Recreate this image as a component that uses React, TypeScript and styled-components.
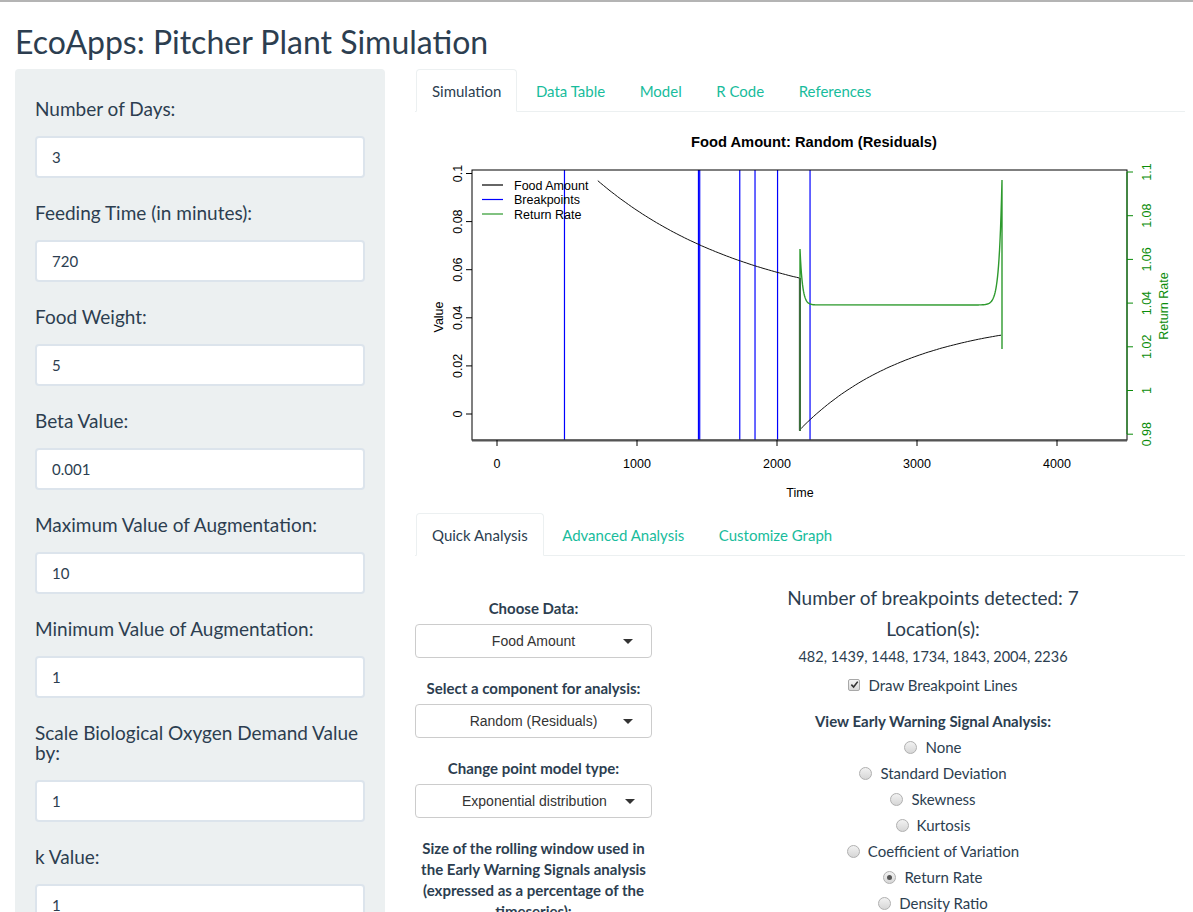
import React from "react";
import styled, { createGlobalStyle } from "styled-components";

const navy = "#2c3e50";
const teal = "#18bc9c";
const line = "#ecf0f1";

const GlobalStyle = createGlobalStyle`
  html, body {
    margin: 0;
    padding: 0;
    overflow: hidden;
  }
  body {
    border-top: 2px solid #b4b4b4;
    font-family: Lato, "Open Sans", sans-serif;
    font-size: 15px;
    color: ${navy};
    background: #ffffff;
  }
`;

const Page = styled.div`
  padding: 0 15px;
`;

const Title = styled.h2`
  margin: 22px 0 10px;
  font-size: 32px;
  line-height: 35px;
  font-weight: 400;
`;

const Layout = styled.div`
  display: flex;
  gap: 30px;
  align-items: flex-start;
`;

const Sidebar = styled.div`
  width: 370px;
  flex-shrink: 0;
  box-sizing: border-box;
  background: ${line};
  border-radius: 4px;
  padding: 30px 20px 20px 20px;
`;

const Field = styled.div`
  margin-bottom: 25px;
`;

const Label = styled.div`
  font-size: 19px;
  line-height: 20px;
  margin-bottom: 17px;
`;

const TextInput = styled.input`
  display: block;
  width: 100%;
  height: 42px;
  box-sizing: border-box;
  border: 2px solid #dce4ec;
  border-radius: 4px;
  padding: 0 15px;
  font-family: Lato, sans-serif;
  font-size: 15px;
  color: ${navy};
  background: #fff;
  outline: none;
`;

const Main = styled.div`
  flex: 1;
  padding-right: 8px;
`;

const TabList = styled.div`
  display: flex;
  gap: 2.5px;
  height: 43px;
  box-sizing: border-box;
  border-bottom: 1px solid ${line};
  padding-left: 1px;
`;

const Tab = styled.div<{ $active?: boolean }>`
  height: 43px;
  box-sizing: border-box;
  padding: 0 15px;
  display: flex;
  align-items: center;
  border: 1px solid ${(p) => (p.$active ? line : "transparent")};
  border-bottom-color: ${(p) => (p.$active ? "#fff" : "transparent")};
  border-radius: 4px 4px 0 0;
  background: ${(p) => (p.$active ? "#fff" : "transparent")};
  color: ${(p) => (p.$active ? navy : teal)};
  font-size: 15px;
`;

const Plot = styled.svg`
  display: block;
  font-family: "Liberation Sans", Arial, sans-serif;
`;

const Analysis = styled.div`
  display: grid;
  grid-template-columns: 237px 1fr;
  column-gap: 29px;
`;

const LeftCol = styled.div`
  padding-top: 42px;
  text-align: center;
`;

const Group = styled.div`
  margin-bottom: 20px;
`;

const BoldLabel = styled.div`
  font-weight: 700;
  font-size: 15px;
  line-height: 21px;
  margin-bottom: 5px;
`;

const Select = styled.div`
  display: grid;
  grid-template-columns: 46px 1fr 46px;
  align-items: center;
  height: 34px;
  box-sizing: border-box;
  border: 1px solid #cccccc;
  border-radius: 4px;
  background: #fff;
  font-family: "Liberation Sans", Arial, sans-serif;
  font-size: 14px;
  color: #333;
`;

const SelectText = styled.span`
  grid-column: 2;
  text-align: center;
  white-space: nowrap;
`;

const Caret = styled.span`
  grid-column: 3;
  justify-self: center;
  width: 0;
  height: 0;
  border-left: 5px solid transparent;
  border-right: 5px solid transparent;
  border-top: 5px solid #333;
`;

const RightCol = styled.div`
  padding-top: 26px;
  text-align: center;
`;

const Heading = styled.div`
  font-size: 19px;
  line-height: 31px;
`;

const Plain = styled.div`
  font-size: 14.5px;
  line-height: 25px;
`;

const Row = styled.div<{ $h?: number }>`
  display: flex;
  align-items: center;
  justify-content: center;
  gap: 8px;
  height: ${(p) => p.$h ?? 26}px;
  font-size: 15px;
`;

const CheckRow = styled(Row)`
  margin-top: 3px;
`;

const SubHead = styled.div`
  font-weight: 700;
  font-size: 15px;
  line-height: 25px;
  margin-top: 12px;
`;

const Box = styled.span`
  width: 12px;
  height: 12px;
  box-sizing: border-box;
  border: 1px solid #a8a8a8;
  border-radius: 2px;
  background: linear-gradient(#f4f4f4, #d8d8d8);
  display: flex;
  align-items: center;
  justify-content: center;
`;

const Radio = styled.span<{ $on?: boolean }>`
  width: 13px;
  height: 13px;
  box-sizing: border-box;
  border: 1px solid #b0b0b0;
  border-radius: 50%;
  background: linear-gradient(#f2f2f2, #d6d6d6);
  display: flex;
  align-items: center;
  justify-content: center;
  &::after {
    content: "";
    width: 5px;
    height: 5px;
    border-radius: 50%;
    background: ${(p) => (p.$on ? "#555" : "transparent")};
  }
`;

const fields: [string, string][] = [
  ["Number of Days:", "3"],
  ["Feeding Time (in minutes):", "720"],
  ["Food Weight:", "5"],
  ["Beta Value:", "0.001"],
  ["Maximum Value of Augmentation:", "10"],
  ["Minimum Value of Augmentation:", "1"],
  ["Scale Biological Oxygen Demand Value by:", "1"],
  ["k Value:", "1"],
  ["Number of Trials:", "1"],
];

const X = (t: number) => 82 + t * 0.14;
const Y = (v: number) => 302 - v * 2405;

function foodPath() {
  const pts: string[] = [];
  for (let t = 720; t <= 2160; t += 20) {
    const v = 0.0409 + 0.0561 * Math.pow(0.528, (t - 720) / 720);
    pts.push(`${X(t).toFixed(1)},${Y(v).toFixed(1)}`);
  }
  for (let t = 2160; t <= 3600; t += 20) {
    const v = 0.0403 - 0.047 * Math.pow(0.4, (t - 2160) / 720);
    pts.push(`${X(t).toFixed(1)},${Y(v).toFixed(1)}`);
  }
  return "M" + pts.join(" L");
}

function returnPath() {
  const pts: string[] = ["385,319", "385,137"];
  for (let x = 385.5; x <= 400; x += 0.5) {
    pts.push(`${x},${(193 - 56 * Math.exp(-(x - 385) / 2.5)).toFixed(1)}`);
  }
  for (let x = 560; x <= 587; x += 0.5) {
    pts.push(`${x},${(193 - 125 * Math.exp((x - 587) / 3)).toFixed(1)}`);
  }
  pts.push("587,237");
  return "M" + pts.join(" L");
}

const breaks = [482, 1439, 1448, 1734, 1843, 2004, 2236];
const leftTicks: [string, number][] = [
  ["0.1", 0.1],
  ["0.08", 0.08],
  ["0.06", 0.06],
  ["0.04", 0.04],
  ["0.02", 0.02],
  ["0", 0],
];
const rightTicks = ["1.1", "1.08", "1.06", "1.04", "1.02", "1", "0.98"];
const green = "#0a8c0a";

function Chart() {
  return (
    <Plot width={770} height={401} viewBox="0 0 770 401">
      <text x={399} y={35} textAnchor="middle" fontSize={14.7} fontWeight={700}>
        Food Amount: Random (Residuals)
      </text>

      {breaks.map((b) => (
        <line key={b} x1={X(b)} x2={X(b)} y1={58} y2={328} stroke="#0000ff" strokeWidth={1.2} />
      ))}
      <path d={foodPath()} fill="none" stroke="#111" strokeWidth={1} />
      <path d={returnPath()} fill="none" stroke="#2e9a2e" strokeWidth={1.4} />
      <line x1={385} x2={385} y1={166} y2={319} stroke="#3b6e3b" strokeWidth={2} />

      <rect x={57} y={58} width={655} height={270} fill="none" stroke="#000" strokeWidth={1} />
      <line x1={57} x2={712} y1={328.5} y2={328.5} stroke="#555" strokeWidth={2} />

      {leftTicks.map(([l, v]) => (
        <g key={l}>
          <line x1={51} x2={57} y1={Y(v)} y2={Y(v)} stroke="#000" />
          <text transform={`translate(47,${Y(v)}) rotate(-90)`} textAnchor="middle" fontSize={12.5}>
            {l}
          </text>
        </g>
      ))}
      <text transform="translate(28,205) rotate(-90)" textAnchor="middle" fontSize={12.5}>
        Value
      </text>

      {[0, 1000, 2000, 3000, 4000].map((t) => (
        <g key={t}>
          <line x1={X(t)} x2={X(t)} y1={328} y2={334} stroke="#000" />
          <text x={X(t)} y={355.5} textAnchor="middle" fontSize={12.5}>
            {t}
          </text>
        </g>
      ))}
      <text x={385} y={384.5} textAnchor="middle" fontSize={12.5}>
        Time
      </text>

      <line x1={712} x2={712} y1={60} y2={322} stroke={green} />
      {rightTicks.map((l, i) => {
        const y = 60 + i * 43.7;
        return (
          <g key={l}>
            <line x1={712} x2={718} y1={y} y2={y} stroke={green} />
            <text transform={`translate(736,${y}) rotate(-90)`} textAnchor="middle" fontSize={12.5} fill={green}>
              {l}
            </text>
          </g>
        );
      })}
      <text transform="translate(753,194) rotate(-90)" textAnchor="middle" fontSize={12.5} fill={green}>
        Return Rate
      </text>

      {[
        ["Food Amount", "#000"],
        ["Breakpoints", "#0000ff"],
        ["Return Rate", "#2e9a2e"],
      ].map(([l, c], i) => (
        <g key={l}>
          <line x1={67} x2={88} y1={73 + i * 14.5} y2={73 + i * 14.5} stroke={c} strokeWidth={1.2} />
          <text x={99} y={77.5 + i * 14.5} fontSize={12.5}>
            {l}
          </text>
        </g>
      ))}
    </Plot>
  );
}

const selects = [
  ["Choose Data:", "Food Amount"],
  ["Select a component for analysis:", "Random (Residuals)"],
  ["Change point model type:", "Exponential distribution"],
];

const radios = [
  "None",
  "Standard Deviation",
  "Skewness",
  "Kurtosis",
  "Coefficient of Variation",
  "Return Rate",
  "Density Ratio",
];

export default function App() {
  return (
    <Page>
      <GlobalStyle />
      <Title>EcoApps: Pitcher Plant Simulation</Title>
      <Layout>
        <Sidebar>
          {fields.map(([label, value]) => (
            <Field key={label}>
              <Label>{label}</Label>
              <TextInput defaultValue={value} />
            </Field>
          ))}
        </Sidebar>
        <Main>
          <TabList>
            <Tab $active>Simulation</Tab>
            <Tab>Data Table</Tab>
            <Tab>Model</Tab>
            <Tab>R Code</Tab>
            <Tab>References</Tab>
          </TabList>
          <Chart />
          <TabList>
            <Tab $active>Quick Analysis</Tab>
            <Tab>Advanced Analysis</Tab>
            <Tab>Customize Graph</Tab>
          </TabList>
          <Analysis>
            <LeftCol>
              {selects.map(([label, value]) => (
                <Group key={label}>
                  <BoldLabel>{label}</BoldLabel>
                  <Select>
                    <SelectText>{value}</SelectText>
                    <Caret />
                  </Select>
                </Group>
              ))}
              <BoldLabel>
                Size of the rolling window used in the Early Warning Signals analysis (expressed as a
                percentage of the timeseries):
              </BoldLabel>
            </LeftCol>
            <RightCol>
              <Heading>Number of breakpoints detected: 7</Heading>
              <Heading>Location(s):</Heading>
              <Plain>482, 1439, 1448, 1734, 1843, 2004, 2236</Plain>
              <CheckRow $h={25}>
                <Box>
                  <svg width="9" height="9" viewBox="0 0 10 10">
                    <path d="M1.5 5.2 L4 7.8 L8.6 1.8" fill="none" stroke="#333" strokeWidth="1.8" />
                  </svg>
                </Box>
                <span>Draw Breakpoint Lines</span>
              </CheckRow>
              <SubHead>View Early Warning Signal Analysis:</SubHead>
              {radios.map((r) => (
                <Row key={r}>
                  <Radio $on={r === "Return Rate"} />
                  <span>{r}</span>
                </Row>
              ))}
            </RightCol>
          </Analysis>
        </Main>
      </Layout>
    </Page>
  );
}
